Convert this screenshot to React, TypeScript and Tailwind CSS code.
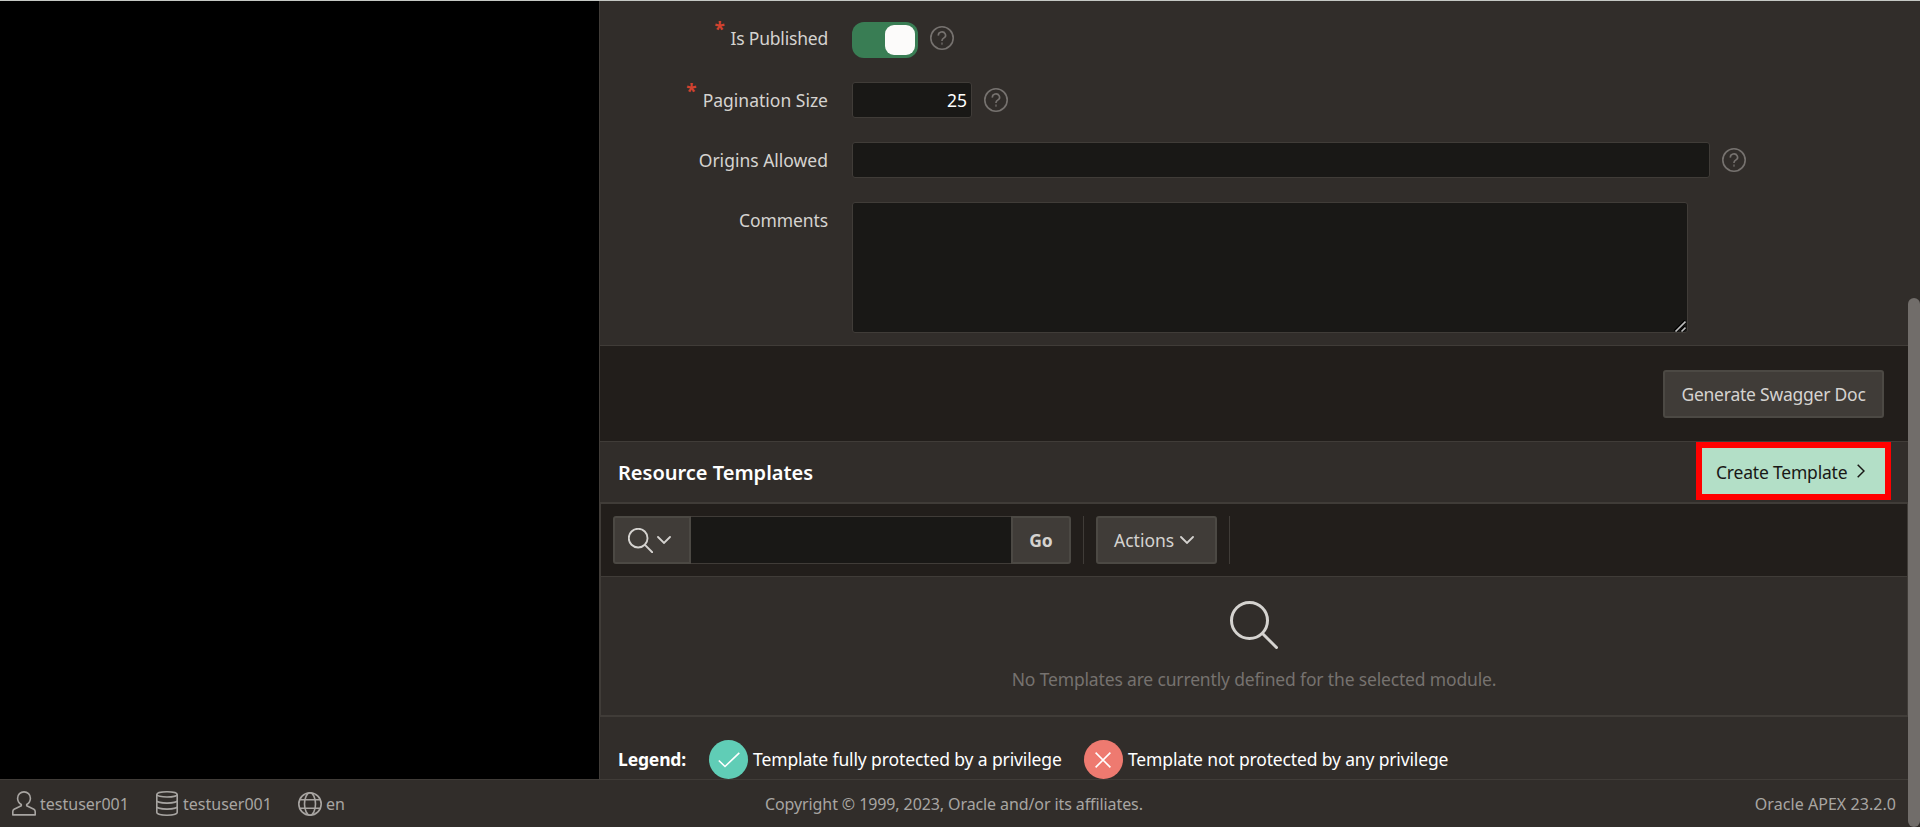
import * as React from "react";

function HelpIcon({ className }: { className: string }) {
  return (
    <svg viewBox="0 0 24 24" className={`size-6 shrink-0 text-[#76726f] ${className}`} fill="none" stroke="currentColor" strokeWidth="1.6">
      <circle cx="12" cy="12" r="11.2" />
      <path d="M8.400 9.600a3.600 3.300 0 1 1 5.600 2.300c-1.300.8-2 1.300-2 2.700v.5" />
      <circle cx="12" cy="17.600" r="0.3" />
    </svg>
  );
}

function SearchIcon({ className }: { className: string }) {
  return (
    <svg viewBox="0 0 48 48" className={`shrink-0 ${className}`} fill="none" stroke="currentColor" strokeLinecap="round">
      <circle cx="19.5" cy="19.5" r="18" />
      <path d="M33 33l13.5 13.5" />
    </svg>
  );
}

function ChevronDown() {
  return (
    <svg viewBox="0 0 14 8" className="h-2 w-3.5 shrink-0" fill="none" stroke="currentColor" strokeWidth="1.8" strokeLinecap="round">
      <path d="M1 1l6 6 6-6" />
    </svg>
  );
}

function Field({ label, labelClass, required, className, children }: {
  label: string;
  labelClass: string;
  required?: boolean;
  className?: string;
  children: React.ReactNode;
}) {
  return (
    <div className={`flex items-start ${className ?? ""}`}>
      <div className={`mr-6 flex w-[228px] shrink-0 justify-end leading-6 text-[#d5d3d0] ${labelClass}`}>
        {required && <span className="-mt-[9px] mr-1.5 text-[19px] font-bold text-[#d1422f]">*</span>}
        <span>{label}</span>
      </div>
      {children}
    </div>
  );
}

function Footer() {
  return (
    <footer className="flex h-12 shrink-0 items-center border-t border-[#403c38] bg-[#312d2a] px-3 text-[16px] leading-6 text-[#a8a5a2]">
      <div className="flex w-[753px] items-center">
        <svg viewBox="0 0 24 25" className="h-[25px] w-6" fill="none" stroke="currentColor" strokeWidth="1.6" strokeLinejoin="round">
          <path d="M9.3 13.5C6.800 12.200 5.600 10 5.600 7.300 5.600 3.500 8.500.9 12 .9s6.400 2.600 6.400 6.400c0 2.700-1.200 4.900-3.700 6.200v1.300l7.200 3.500c.9.500 1.300 1.300 1.300 2.300v3.300H.8v-3.300c0-1 .4-1.800 1.300-2.300l7.200-3.500z" />
        </svg>
        <span className="ml-1 w-[87px]">testuser001</span>
        <svg viewBox="0 0 22 25" className="ml-[29px] h-[25px] w-[22px]" fill="none" stroke="currentColor" strokeWidth="1.6">
          <ellipse cx="11" cy="3.400" rx="10.200" ry="2.600" />
          <path d="M.8 3.400v18.200c0 1.400 4.600 2.600 10.200 2.600s10.200-1.200 10.200-2.600V3.400M.8 9.500c0 1.400 4.600 2.600 10.200 2.600s10.200-1.200 10.200-2.600M.8 15.500c0 1.400 4.600 2.600 10.200 2.600s10.200-1.200 10.200-2.600" />
        </svg>
        <span className="ml-[5px] w-[87px]">testuser001</span>
        <svg viewBox="0 0 24 24" className="ml-7 size-6" fill="none" stroke="currentColor" strokeWidth="1.600">
          <circle cx="12" cy="12" r="11.200" />
          <ellipse cx="12" cy="12" rx="5.500" ry="11.200" />
          <path d="M2 7.800h20M2 16.200h20" />
        </svg>
        <span className="ml-1">en</span>
      </div>
      <span className="tracking-[-0.1px]">Copyright © 1999, 2023, Oracle and/or its affiliates.</span>
      <span className="ml-auto mr-3 tracking-[0.05px]">Oracle APEX 23.2.0</span>
    </footer>
  );
}

export default function App() {
  return (
    <div className="h-[830px] w-[1920px] overflow-hidden bg-white font-['Noto_Sans',sans-serif] text-[17.5px]">
      <div className="relative flex h-[827px] flex-col border-t border-[#c5c8c4] bg-black">
        <div className="flex h-[778px] pr-3">
          <aside className="w-[599px] shrink-0 bg-black" />
          <main className="flex flex-1 flex-col border-l border-[#403c38] bg-[#312d2a]">
            <section className="h-[345px] border-b border-[#403c38] pt-[21px]">
              <Field label="Is Published" labelClass="pt-1 tracking-[-0.2px]" required className="h-[60px]">
                <button className="flex h-9 w-[66px] justify-end rounded-xl bg-[#397d54] p-[3px]">
                  <span className="size-[30px] rounded-[9px] bg-[#fcfbfa]" />
                </button>
                <HelpIcon className="ml-3 mt-1" />
              </Field>
              <Field label="Pagination Size" labelClass="pt-1.5" required className="h-[60px]">
                <input className="h-9 w-[120px] rounded-[3px] border border-[#403c38] bg-[#191816] pr-1 text-right text-white" defaultValue="25" />
                <HelpIcon className="ml-3 mt-1.5" />
              </Field>
              <Field label="Origins Allowed" labelClass="pt-1.5" className="h-[60px]">
                <input className="h-9 w-[858px] rounded-[3px] border border-[#403c38] bg-[#191816]" />
                <HelpIcon className="ml-3 mt-1.5" />
              </Field>
              <Field label="Comments" labelClass="pt-1.5 tracking-[-0.1px]">
                <div className="relative">
                  <textarea className="block h-[131px] w-[836px] resize-none rounded-[3px] border border-[#403c38] bg-[#191816]" />
                  <svg viewBox="0 0 12 12" className="pointer-events-none absolute right-[2px] bottom-[1px] size-3" fill="none">
                    <path d="M1 11.500L11.500 1M7 11.500L11.500 7" stroke="#000" strokeWidth="3.500" />
                    <path d="M1.500 11.500l10-10M7.500 11.500l4-4" stroke="#bdbdbd" strokeWidth="1.600" />
                  </svg>
                </div>
              </Field>
            </section>

            <section className="flex h-24 items-center justify-end border-b border-[#403c38] bg-[#221e1b] pr-6">
              <button className="h-12 w-[221px] rounded-[3px] border-2 border-[#4c4944] bg-[#403c38] pt-0.5 tracking-[-0.23px] whitespace-nowrap text-[#d5d3d0]">Generate Swagger Doc</button>
            </section>

            <header className="flex h-[61px] items-start justify-between border-b border-[#403c38] pl-[18px] pr-[17px]">
              <h2 className="mt-[19px] text-[20px] leading-6 font-semibold text-white">Resource Templates</h2>
              <button className="flex h-[58px] w-[195px] items-center border-6 border-[#ff0000] bg-[#b3dfc7] pl-[14px] whitespace-nowrap text-[#191816]">
                <span className="w-[132px] pt-0.5 text-left tracking-[-0.2px]">Create Template</span>
                <svg viewBox="0 0 8 14" className="ml-[9px] h-3.5 w-2" fill="none" stroke="currentColor" strokeWidth="1.5">
                  <path d="M.7.700l6.300 6.300-6.300 6.300" />
                </svg>
              </button>
            </header>

            <section className="h-[213px] border border-[#403c38]">
              <div className="flex h-[73px] items-center border-b border-[#403c38] bg-[#221e1b] pl-3 text-[#d5d3d0]">
                <button className="flex h-12 w-[78px] items-center rounded-l-[3px] border-2 border-[#4c4944] bg-[#403c38] pl-[13px]">
                  <SearchIcon className="size-[25px] stroke-[3.6]" />
                  <span className="ml-1"><ChevronDown /></span>
                </button>
                <input className="h-12 w-80 border-y border-[#403c38] bg-[#191816]" />
                <button className="h-12 w-[60px] rounded-r-[3px] border-2 border-[#4c4944] bg-[#403c38] font-bold">Go</button>
                <span className="ml-3 h-12 w-px bg-[#403c38]" />
                <button className="ml-3 flex h-12 w-[121px] items-center rounded-[3px] border-2 border-[#4c4944] bg-[#403c38] pl-4">
                  <span className="w-[62px] text-left">Actions</span>
                  <span className="ml-1"><ChevronDown /></span>
                </button>
                <span className="ml-3 h-12 w-px bg-[#403c38]" />
              </div>
              <div className="flex flex-col items-center pt-6">
                <SearchIcon className="size-12 stroke-3 text-[#d5d3d0]" />
                <p className="mt-[18px] leading-6 tracking-[-0.16px] whitespace-nowrap text-[#76726f]">No Templates are currently defined for the selected module.</p>
              </div>
            </section>

            <section className="flex flex-1 items-end border-t border-[#403c38] pl-[18px] text-white">
              <strong className="mb-2 w-[91px] leading-6 tracking-[-0.15px]">Legend:</strong>
              <span className="flex size-[39px] shrink-0 items-center justify-center rounded-full bg-[#60cdb6]">
                <svg viewBox="0 0 22 16" className="h-4 w-[22px]" fill="none" stroke="currentColor" strokeWidth="1.600">
                  <path d="M.8 8.500l6.200 6L21.300.8" />
                </svg>
              </span>
              <span className="mb-2 ml-[5px] w-[331px] leading-6 tracking-[-0.12px] whitespace-nowrap">Template fully protected by a privilege</span>
              <span className="flex size-[39px] shrink-0 items-center justify-center rounded-full bg-[#ee7a70]">
                <svg viewBox="0 0 16 16" className="mr-0.5 size-4" fill="none" stroke="currentColor" strokeWidth="1.600">
                  <path d="M.6.600l14.800 14.800M15.400.600L.6 15.400" />
                </svg>
              </span>
              <span className="mb-2 ml-[5px] leading-6 tracking-[-0.15px] whitespace-nowrap">Template not protected by any privilege</span>
            </section>
          </main>
        </div>
        <Footer />
        <div className="absolute right-0 top-0 h-[826px] w-3 bg-[#312d2a]">
          <div className="mt-[297px] h-[529px] rounded-md bg-[#716d6a]" />
        </div>
      </div>
    </div>
  );
}
